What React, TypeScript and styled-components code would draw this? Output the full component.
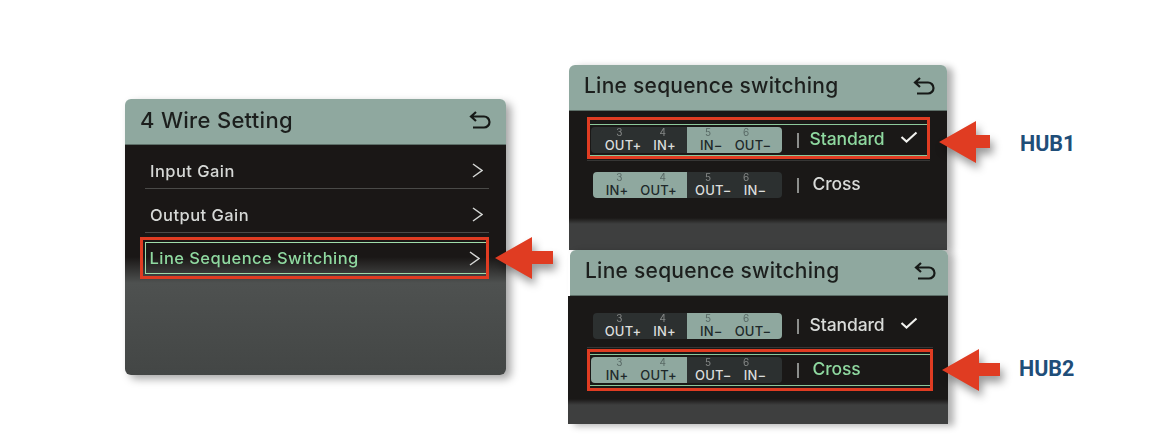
import styled, { createGlobalStyle } from 'styled-components';

const GlobalStyle = createGlobalStyle`
  html, body {
    margin: 0;
    background: #ffffff;
  }
`;

const BackIcon = () => (
  <BackSvg viewBox="0 0 22 18" fill="none">
    <path
      d="M7 1 L2 5.5 L7 10 M2 5.5 H15 a5.5 5.5 0 0 1 0 11 H4"
      stroke="#161917"
      strokeWidth="2.2"
    />
  </BackSvg>
);

const Chevron = () => (
  <ChevronSvg viewBox="0 0 11 15" fill="none">
    <path d="M1 1 L10 7.5 L1 14" stroke="#d4d6d4" strokeWidth="1.5" />
  </ChevronSvg>
);

const Check = () => (
  <CheckSvg viewBox="0 0 18 12" fill="none">
    <path d="M1.5 6 L6.5 10.5 L16.5 1.5" stroke="#f1f1ee" strokeWidth="2.1" />
  </CheckSvg>
);

const RedArrow = ({ width }: { width: number }) => (
  <ArrowSvg width={width} height="42" viewBox={`0 0 ${width} 42`}>
    <polygon
      points={`0,21 37,0 37,14 ${width},14 ${width},27 37,27 37,42`}
      fill="#e03c22"
    />
  </ArrowSvg>
);

type SegmentInfo = { nums: string[]; labels: string[]; inset: number };

const STANDARD: SegmentInfo[] = [
  { nums: ['3', '4'], labels: ['OUT+', 'IN+'], inset: 11 },
  { nums: ['5', '6'], labels: ['IN−', 'OUT−'], inset: 13 },
];

const CROSS: SegmentInfo[] = [
  { nums: ['3', '4'], labels: ['IN+', 'OUT+'], inset: 10 },
  { nums: ['5', '6'], labels: ['OUT−', 'IN−'], inset: 8 },
];

const PortPill = ({ cross, marked }: { cross?: boolean; marked?: boolean }) => (
  <Pill $marked={marked}>
    {(cross ? CROSS : STANDARD).map((segment, i) => (
      <Segment key={i} $first={i === 0} $light={cross ? i === 0 : i === 1}>
        <NumRow $first={i === 0}>
          {segment.nums.map((num) => (
            <PortNum key={num}>{num}</PortNum>
          ))}
        </NumRow>
        <LabelRow $first={i === 0} $inset={segment.inset}>
          {segment.labels.map((label) => (
            <PortLabel key={label}>{label}</PortLabel>
          ))}
        </LabelRow>
      </Segment>
    ))}
  </Pill>
);

const WireOption = ({
  cross,
  active,
  selected,
  drop,
  arrowWidth,
  arrowTop,
}: {
  cross?: boolean;
  active?: boolean;
  selected?: boolean;
  drop?: boolean;
  arrowWidth?: number;
  arrowTop?: number;
}) => (
  <OptionFrame $marked={active} $drop={drop}>
    <OptionInner $marked={active}>
      <PortPill cross={cross} marked={active} />
      <Tick />
      <OptionName $active={active} $cross={cross}>
        {cross ? 'Cross' : 'Standard'}
      </OptionName>
      {selected && <Check />}
    </OptionInner>
    {active && arrowWidth && (
      <ArrowSlot $gap={12} $top={arrowTop ?? -3}>
        <RedArrow width={arrowWidth} />
      </ArrowSlot>
    )}
  </OptionFrame>
);

export default function App() {
  return (
    <Page>
      <GlobalStyle />
      <MenuPanel>
        <Header $endPad={15}>
          <Title $big>4 Wire Setting</Title>
          <BackIcon />
        </Header>
        <MenuBody>
          <MenuRow>
            <MenuLabel>Input Gain</MenuLabel>
            <Chevron />
          </MenuRow>
          <MenuRow>
            <MenuLabel>Output Gain</MenuLabel>
            <Chevron />
          </MenuRow>
          <SelectedFrame>
            <SelectedRow>
              <MenuLabel $active>Line Sequence Switching</MenuLabel>
              <Chevron />
            </SelectedRow>
            <ArrowSlot $gap={9} $top={-3}>
              <RedArrow width={58} />
            </ArrowSlot>
          </SelectedFrame>
        </MenuBody>
      </MenuPanel>

      <RightColumn>
        <HubBlock $height={185}>
          <SwitchPanel>
            <Header>
              <Title>Line sequence switching</Title>
              <BackIcon />
            </Header>
            <OptionList $top={6} $fade={107}>
              <WireOption active selected drop arrowWidth={51} arrowTop={1} />
              <Divider $above={1} $below={3} />
              <WireOption cross />
            </OptionList>
          </SwitchPanel>
          <HubLabel $top={65} $left={73}>HUB1</HubLabel>
        </HubBlock>
        <HubBlock $height={174}>
          <SwitchPanel $wide>
            <Header $inset>
              <Title>Line sequence switching</Title>
              <BackIcon />
            </Header>
            <OptionList $wide $top={9} $fade={103}>
              <WireOption selected />
              <Divider $above={0} $below={1} />
              <WireOption cross active arrowWidth={58} />
            </OptionList>
          </SwitchPanel>
          <HubLabel $top={105} $left={71}>HUB2</HubLabel>
        </HubBlock>
      </RightColumn>
    </Page>
  );
}

const Page = styled.div`
  width: 1157px;
  height: 444px;
  box-sizing: border-box;
  padding-left: 125px;
  display: flex;
  align-items: flex-start;
  overflow: hidden;
  font-family: 'Inter', 'Liberation Sans', sans-serif;
`;

const MenuPanel = styled.div`
  width: 381px;
  height: 276px;
  margin-top: 99px;
  display: flex;
  flex-direction: column;
  border-radius: 6px;
  box-shadow: 5px 4px 8px rgba(0, 0, 0, 0.35);
`;

const Header = styled.div<{ $inset?: boolean; $endPad?: number }>`
  height: 46px;
  flex: none;
  margin-left: ${(p) => (p.$inset ? '2px' : '0')};
  padding: 0 ${(p) => p.$endPad ?? 12}px 4px 15px;
  display: flex;
  align-items: center;
  justify-content: space-between;
  background: #8fa89f;
  border-radius: 6px 6px 0 0;
  border-bottom: 1px solid #5d6f68;
  box-sizing: border-box;
`;

const Title = styled.span<{ $big?: boolean }>`
  font-size: ${(p) => (p.$big ? 22 : 21)}px;
  font-weight: 500;
  letter-spacing: ${(p) => (p.$big ? 0.3 : 0.25)}px;
  color: #1c1f1d;
  filter: blur(0.4px);
`;

const BackSvg = styled.svg`
  width: 22px;
  height: 18px;
  flex: none;
`;

const ChevronSvg = styled.svg`
  width: 11px;
  height: 15px;
  flex: none;
`;

const CheckSvg = styled.svg`
  width: 18px;
  height: 12px;
  margin-left: 15px;
  margin-top: -6px;
  flex: none;
`;

const ArrowSvg = styled.svg`
  display: block;
  filter: drop-shadow(3px 6px 4px rgba(0, 0, 0, 0.4));
`;

const MenuBody = styled.div`
  flex: 1;
  padding: 0 17px 0 20px;
  border-radius: 0 0 6px 6px;
  background: linear-gradient(#1a1716 112px, #4e5150 138px, #434645 100%);
`;

const MenuRow = styled.div`
  height: 44px;
  box-sizing: border-box;
  padding: 8px 6px 0 5px;
  display: flex;
  align-items: center;
  justify-content: space-between;
  border-bottom: 1px solid #4a4a48;
`;

const MenuLabel = styled.span<{ $active?: boolean }>`
  font-size: 16.5px;
  font-weight: 500;
  letter-spacing: 0.45px;
  color: ${(p) => (p.$active ? '#8fd9a0' : '#d6d8d6')};
  filter: blur(0.3px);
`;

const SelectedFrame = styled.div`
  position: relative;
  margin: 4px 0 0 -5px;
  height: 42px;
  box-sizing: border-box;
  border: 3px solid #e03c22;
  padding: 2px 0 2px 2px;
`;

const SelectedRow = styled.div`
  height: 100%;
  box-sizing: border-box;
  padding: 0 6px 0 3.5px;
  display: flex;
  align-items: center;
  justify-content: space-between;
  border: 1.5px solid #9fdcaa;
  border-right: none;
`;

const ArrowSlot = styled.div<{ $gap: number; $top: number }>`
  position: absolute;
  left: 100%;
  top: ${(p) => p.$top}px;
  margin-left: ${(p) => p.$gap}px;
  z-index: 2;
`;

const RightColumn = styled.div`
  margin-left: 63px;
  padding-top: 65px;
  display: flex;
  flex-direction: column;
`;

const HubBlock = styled.div<{ $height: number }>`
  height: ${(p) => p.$height}px;
  display: flex;
  align-items: flex-start;
`;

const SwitchPanel = styled.div<{ $wide?: boolean }>`
  width: ${(p) => (p.$wide ? 380 : 378)}px;
  margin-left: ${(p) => (p.$wide ? '-1px' : '0')};
  height: 100%;
  display: flex;
  flex-direction: column;
  border-radius: 6px 6px 0 0;
  box-shadow: 6px 2px 7px rgba(0, 0, 0, 0.3);
`;

const OptionList = styled.div<{ $wide?: boolean; $top: number; $fade: number }>`
  flex: 1;
  padding: ${(p) => p.$top}px ${(p) => (p.$wide ? '15px' : '17px')} 0 ${(p) => (p.$wide ? '19px' : '18px')};
  display: flex;
  flex-direction: column;
  background: linear-gradient(#1a1817 ${(p) => p.$fade}px, #3e3f3f ${(p) => p.$fade + 6}px);
`;

const Divider = styled.div<{ $above: number; $below: number }>`
  height: 1px;
  flex: none;
  margin: ${(p) => p.$above}px 0 ${(p) => p.$below}px;
  background: #363635;
`;

const OptionFrame = styled.div<{ $marked?: boolean; $drop?: boolean }>`
  position: relative;
  height: 42px;
  flex: none;
  box-sizing: border-box;
  border: 3px solid ${(p) => (p.$marked ? '#e03c22' : 'transparent')};
  padding: ${(p) => (p.$drop ? '4px 0 0' : '2px 0')};
`;

const OptionInner = styled.div<{ $marked?: boolean }>`
  height: 100%;
  box-sizing: border-box;
  display: flex;
  align-items: center;
  border-top: 1.5px solid ${(p) => (p.$marked ? '#8cc79a' : 'transparent')};
  border-bottom: 1.5px solid ${(p) => (p.$marked ? '#8cc79a' : 'transparent')};
`;

const Pill = styled.div<{ $marked?: boolean }>`
  width: ${(p) => (p.$marked ? 191 : 189)}px;
  height: 26px;
  margin-left: ${(p) => (p.$marked ? 1 : 3)}px;
  flex: none;
  display: flex;
  border-radius: 4px;
  overflow: hidden;
  filter: blur(0.3px);
`;

const Segment = styled.div<{ $first: boolean; $light: boolean }>`
  flex: ${(p) => (p.$first ? '1' : '0 0 95px')};
  display: flex;
  flex-direction: column;
  background: ${(p) => (p.$light ? '#8fa89f' : '#2c3030')};
  color: ${(p) => (p.$light ? '#20282a' : '#dcdedc')};
`;

const NumRow = styled.div<{ $first: boolean }>`
  display: flex;
  justify-content: ${(p) => (p.$first ? 'flex-end' : 'flex-start')};
  gap: ${(p) => (p.$first ? 37 : 32)}px;
  padding: ${(p) => (p.$first ? '0 21px 0 0' : '0 0 0 18px')};
  line-height: 10px;
`;

const LabelRow = styled.div<{ $first: boolean; $inset: number }>`
  display: flex;
  justify-content: ${(p) => (p.$first ? 'flex-end' : 'flex-start')};
  gap: 12px;
  padding: ${(p) => (p.$first ? `0 ${p.$inset}px 0 0` : `0 0 0 ${p.$inset}px`)};
  margin-top: 2px;
  line-height: 13px;
`;

const PortNum = styled.span`
  font-size: 10px;
  opacity: 0.5;
`;

const PortLabel = styled.span`
  font-size: 13px;
  font-weight: 500;
  letter-spacing: 0.2px;
`;

const Tick = styled.span`
  width: 1.5px;
  height: 15px;
  margin-left: 15px;
  flex: none;
  background: #8c8e8c;
`;

const OptionName = styled.span<{ $active?: boolean; $cross?: boolean }>`
  margin-left: ${(p) => (p.$cross ? 14 : 11)}px;
  margin-top: -3px;
  font-size: 17.5px;
  font-weight: 500;
  letter-spacing: -0.1px;
  color: ${(p) => (p.$active ? '#8fd9a0' : '#d9dbd9')};
  filter: blur(0.3px);
`;

const HubLabel = styled.span<{ $top: number; $left: number }>`
  margin-top: ${(p) => p.$top}px;
  margin-left: ${(p) => p.$left}px;
  font-family: 'Roboto', 'Liberation Sans', sans-serif;
  font-size: 21.5px;
  font-weight: 700;
  line-height: 28px;
  color: #1f4e79;
`;
